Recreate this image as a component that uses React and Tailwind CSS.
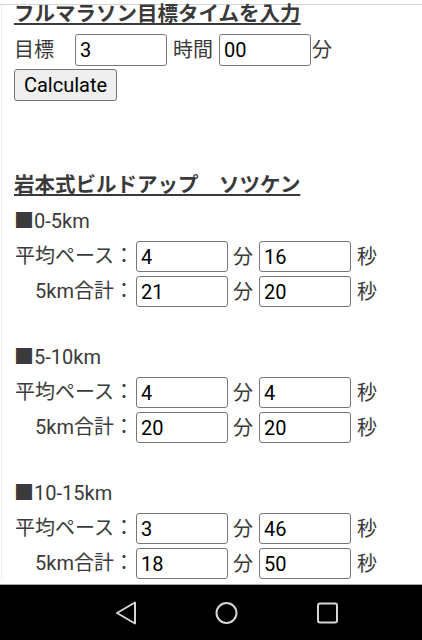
import React from 'react';

const FONT = { fontFamily: 'Roboto, "Noto Sans CJK JP", sans-serif' };

function Field({ value, className = '' }) {
  return (
    <input
      defaultValue={value}
      className={`w-[92px] h-[31px] border border-[#767676] rounded-[3px] bg-white pl-[4px] text-[20px] text-black outline-none ${className}`}
      style={FONT}
    />
  );
}

function PaceRow({ label, min, sec }) {
  return (
    <div className="flex items-center h-[31px]">
      <span className="w-[120px] text-right whitespace-pre leading-[31px]">{label}</span>
      <Field value={min} className="ml-[2px]" />
      <span className="ml-[5px]">分</span>
      <Field value={sec} className="ml-[6px]" />
      <span className="ml-[6px]">秒</span>
    </div>
  );
}

function Section({ title, pace, total }) {
  return (
    <div className="mb-[38px]">
      <div className="h-[24px] leading-[24px]">■{title}</div>
      <div className="mt-[8px] flex flex-col gap-[4px]">
        <PaceRow label="平均ペース：" min={pace[0]} sec={pace[1]} />
        <PaceRow label="5km合計：" min={total[0]} sec={total[1]} />
      </div>
    </div>
  );
}

function NavBar() {
  return (
    <div className="absolute left-0 right-0 bottom-0 h-[56px] bg-black border-t border-[#a8a8a8]">
      <svg width="422" height="55" viewBox="0 0 422 55" fill="none" stroke="#d6d6d6" strokeWidth="2" strokeLinejoin="round">
        <path d="M117 28 L135 17.5 L135 38.5 Z" />
        <circle cx="226.5" cy="28" r="10" />
        <rect x="318" y="18.5" width="19" height="19" rx="2" />
      </svg>
    </div>
  );
}

export default function App() {
  const sections = [
    { title: '0-5km', pace: ['4', '16'], total: ['21', '20'] },
    { title: '5-10km', pace: ['4', '4'], total: ['20', '20'] },
    { title: '10-15km', pace: ['3', '46'], total: ['18', '50'] },
  ];

  return (
    <div className="relative h-[640px] w-[422px] overflow-hidden bg-white text-[20px] text-[#3a3a3a]" style={FONT}>
      <div className="pt-[4px]">
        <div className="h-px bg-[#d4d4d4]" />
      </div>
      <div className="ml-[1px] border-l border-[#efefef] pl-[12px]">
        <div className="h-[18px] leading-[18px] text-[20.5px] font-bold underline">フルマラソン目標タイムを入力</div>

        <div className="mt-[11px] flex items-center h-[32px]">
          <span>目標</span>
          <Field value="3" className="ml-[21px] h-[32px]" />
          <span className="ml-[6px]">時間</span>
          <Field value="00" className="ml-[6px] h-[32px]" />
          <span className="ml-[1px]">分</span>
        </div>

        <button
          className="mt-[3px] h-[32px] w-[103px] bg-[#efefef] border border-[#767676] rounded-[3px] text-[20px] text-black"
          style={FONT}
        >
          Calculate
        </button>

        <div className="mt-[72px] h-[24px] leading-[24px] text-[20.5px] font-bold underline">岩本式ビルドアップ　ソツケン</div>

        <div className="mt-[12px]">
          {sections.map(s => (
            <Section key={s.title} title={s.title} pace={s.pace} total={s.total} />
          ))}
        </div>
      </div>
      <NavBar />
    </div>
  );
}
